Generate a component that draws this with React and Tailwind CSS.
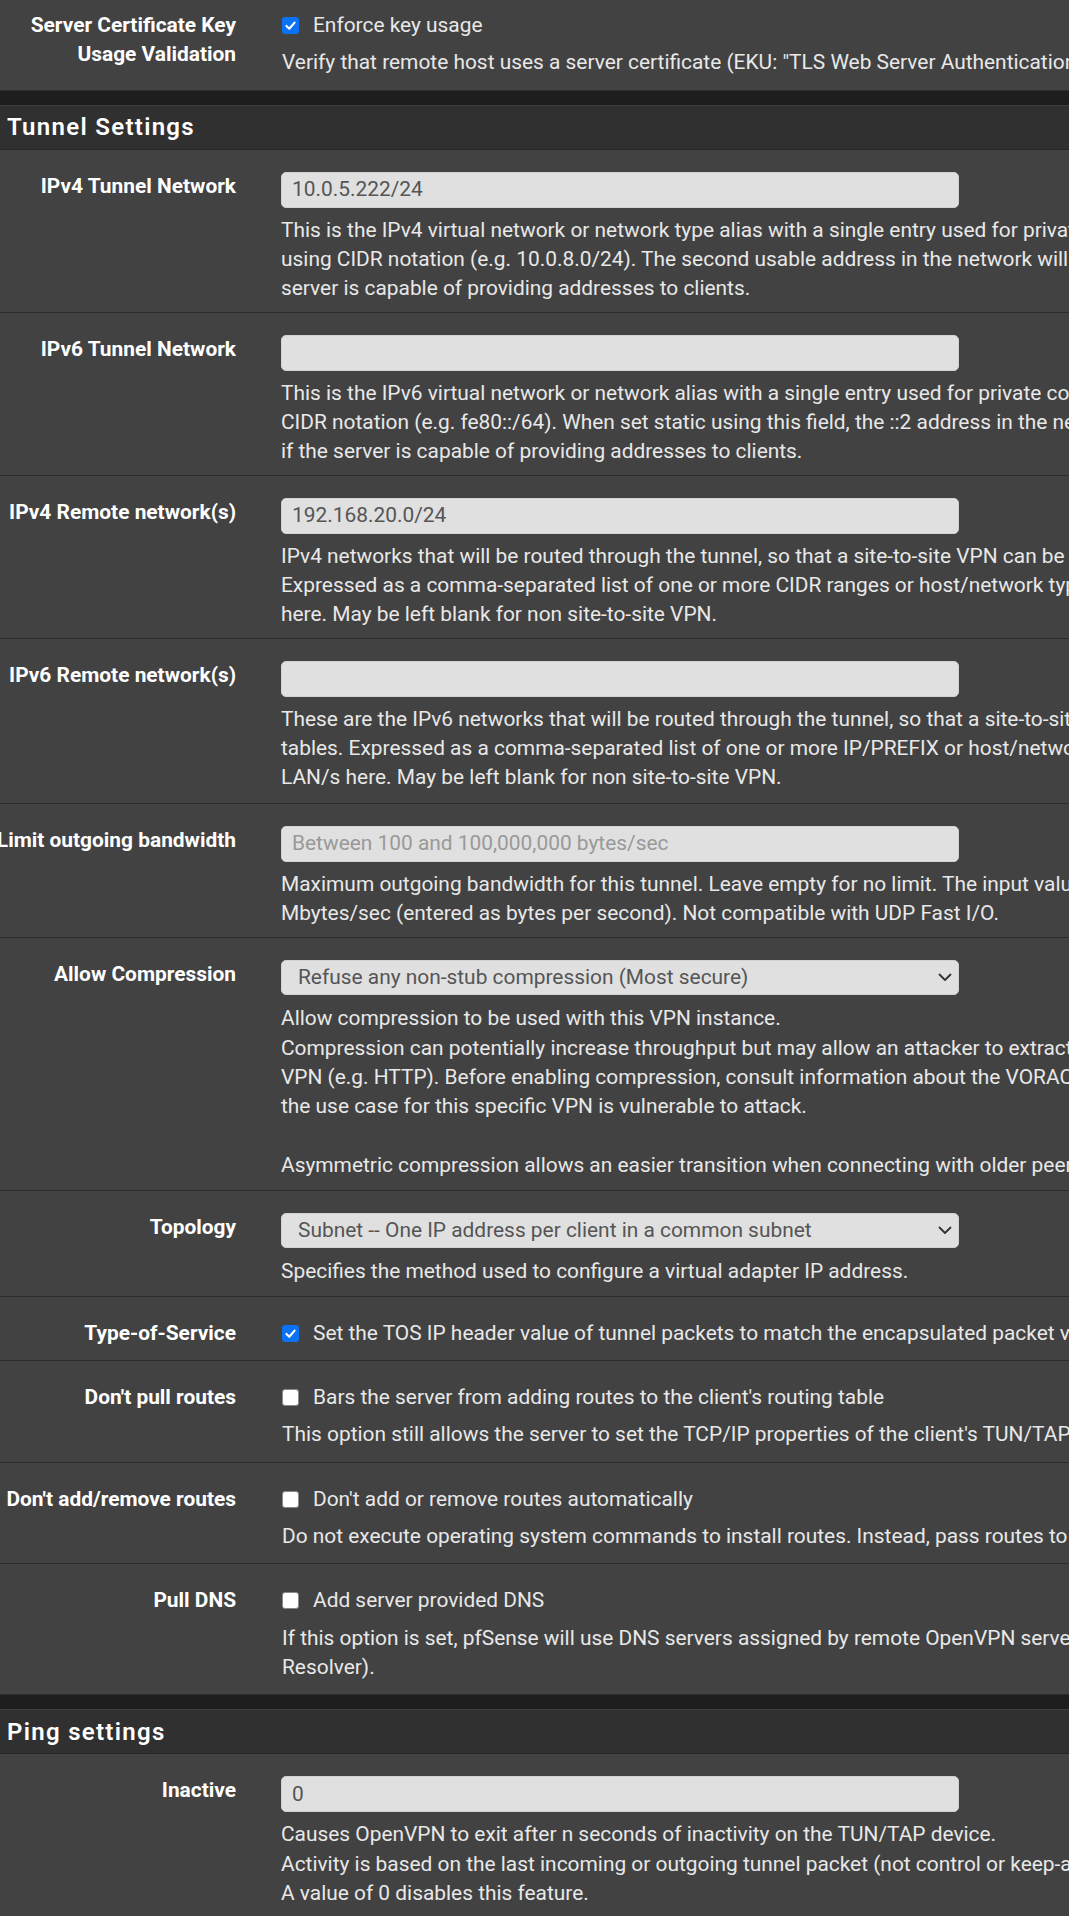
import React from "react";

const Check = ({ checked }) =>
  checked ? (
    <span className="w-[17px] h-[17px] rounded-[3px] bg-[#0b72f5] flex items-center justify-center shrink-0">
      <svg width="13" height="13" viewBox="0 0 16 16">
        <path d="M3 8.5 L6.5 12 L13 4.5" fill="none" stroke="#fff" strokeWidth="2.6" strokeLinecap="round" strokeLinejoin="round" />
      </svg>
    </span>
  ) : (
    <span className="w-[17px] h-[17px] rounded-[3px] bg-white border border-[#8a8a8a] shrink-0" />
  );

const Label = ({ lines }) => (
  <div className="w-[236px] shrink-0 flex flex-col items-end pt-[22px]">
    {lines.map((l, i) => (
      <div key={i} className="whitespace-nowrap font-bold text-white leading-[29.33px]">
        {l}
      </div>
    ))}
  </div>
);

const Help = ({ lines, className = "mt-[8px]" }) => (
  <div className={className}>
    {lines.map((l, i) => (
      <div key={i} className="whitespace-nowrap leading-[29.33px] h-[29.33px] text-[#e8e8e8]">
        {l}
      </div>
    ))}
  </div>
);

const InputRow = ({ label, value, placeholder, help, pb = "pb-[8px]", helpClass }) => (
  <div className={`flex border-b border-[#2c2c2c] ${pb}`}>
    <Label lines={[label]} />
    <div className="ml-[45px] pt-[22px]">
      <div className="w-[678px] h-[36px] rounded-[5px] bg-[#e0e0e0] border border-[#d2d2d2] flex items-center px-[10px] leading-none">
        {value ? (
          <span className="text-[#555]">{value}</span>
        ) : (
          <span className="text-[#999]">{placeholder}</span>
        )}
      </div>
      <Help lines={help} className={helpClass} />
    </div>
  </div>
);

const SelectRow = ({ label, value, help, pb = "pb-[9px]", helpClass = "mt-[9px]" }) => (
  <div className={`flex border-b border-[#2c2c2c] ${pb}`}>
    <Label lines={[label]} />
    <div className="ml-[45px] pt-[22px]">
      <div className="w-[678px] h-[35px] rounded-[5px] bg-[#e0e0e0] border border-[#d2d2d2] flex items-center justify-between pl-[16px] pr-[6px] leading-none">
        <span className="text-[#555] whitespace-nowrap">{value}</span>
        <svg width="14" height="9" viewBox="0 0 14 9">
          <path d="M1.5 1.5 L7 7 L12.5 1.5" fill="none" stroke="#333" strokeWidth="1.8" strokeLinecap="round" strokeLinejoin="round" />
        </svg>
      </div>
      <Help lines={help} className={helpClass} />
    </div>
  </div>
);

const CheckRow = ({ label, checked, text, help, className = "" }) => (
  <div className={`flex border-b border-[#2c2c2c] pb-[12px] ${className}`}>
    <Label lines={label} />
    <div className="ml-[46px] pt-[22px]">
      <div className="flex items-center h-[29.33px] whitespace-nowrap">
        <Check checked={checked} />
        <span className="ml-[14px] text-[#e8e8e8]">{text}</span>
      </div>
      {help && <Help lines={help} />}
    </div>
  </div>
);

const SectionHeader = ({ title }) => (
  <>
    <div className="h-[14px] bg-[#1e1e1e]" />
    <div className="h-[45px] bg-[#303030] border-t border-[#3d3d3d] border-b border-b-[#262626] flex items-center pl-[7px]">
      <span className="text-[24px] font-semibold tracking-[1.3px] text-white">{title}</span>
    </div>
  </>
);

export default function App() {
  return (
    <div className="w-[1069px] h-[1916px] overflow-hidden bg-[#424242] font-['Roboto',sans-serif] text-[20.9px]">
      <CheckRow
        className="mt-[-11px]"
        label={["Server Certificate Key", "Usage Validation"]}
        checked
        text="Enforce key usage"
        help={['Verify that remote host uses a server certificate (EKU: "TLS Web Server Authentication").']}
      />
      <SectionHeader title="Tunnel Settings" />
      <InputRow
        label="IPv4 Tunnel Network"
        value="10.0.5.222/24"
        help={[
          "This is the IPv4 virtual network or network type alias with a single entry used for private communications between this client and the server expressed",
          "using CIDR notation (e.g. 10.0.8.0/24). The second usable address in the network will be assigned to the client virtual interface. Leave blank if the",
          "server is capable of providing addresses to clients.",
        ]}
      />
      <InputRow
        label="IPv6 Tunnel Network"
        value=""
        placeholder=""
        help={[
          "This is the IPv6 virtual network or network alias with a single entry used for private communications between this client and the server expressed using",
          "CIDR notation (e.g. fe80::/64). When set static using this field, the ::2 address in the network will be assigned to the client virtual interface. Leave blank",
          "if the server is capable of providing addresses to clients.",
        ]}
      />
      <InputRow
        label="IPv4 Remote network(s)"
        value="192.168.20.0/24"
        help={[
          "IPv4 networks that will be routed through the tunnel, so that a site-to-site VPN can be established without manually changing the routing tables.",
          "Expressed as a comma-separated list of one or more CIDR ranges or host/network type aliases. If this is a site-to-site VPN, enter the remote LAN/s",
          "here. May be left blank for non site-to-site VPN.",
        ]}
      />
      <InputRow
        label="IPv6 Remote network(s)"
        value=""
        placeholder=""
        pb="pb-[10px]"
        help={[
          "These are the IPv6 networks that will be routed through the tunnel, so that a site-to-site VPN can be established without manually changing the routing",
          "tables. Expressed as a comma-separated list of one or more IP/PREFIX or host/network type aliases. If this is a site-to-site VPN, enter the remote",
          "LAN/s here. May be left blank for non site-to-site VPN.",
        ]}
      />
      <InputRow
        label="Limit outgoing bandwidth"
        value=""
        placeholder="Between 100 and 100,000,000 bytes/sec"
        pb="pb-[9px]"
        help={[
          "Maximum outgoing bandwidth for this tunnel. Leave empty for no limit. The input value has to be something between 100 bytes/sec and 100",
          "Mbytes/sec (entered as bytes per second). Not compatible with UDP Fast I/O.",
        ]}
      />
      <SelectRow
        label="Allow Compression"
        value="Refuse any non-stub compression (Most secure)"
        pb="pb-[10px]"
        help={[
          "Allow compression to be used with this VPN instance.",
          "Compression can potentially increase throughput but may allow an attacker to extract secrets if they can control compressed plaintext traversing the",
          "VPN (e.g. HTTP). Before enabling compression, consult information about the VORACLE, CRIME, TIME, and BREACH attacks against TLS to decide if",
          "the use case for this specific VPN is vulnerable to attack.",
          "",
          "Asymmetric compression allows an easier transition when connecting with older peers.",
        ]}
      />
      <SelectRow
        label="Topology"
        value="Subnet -- One IP address per client in a common subnet"
        help={["Specifies the method used to configure a virtual adapter IP address."]}
      />
      <CheckRow
        label={["Type-of-Service"]}
        checked
        text="Set the TOS IP header value of tunnel packets to match the encapsulated packet value."
      />
      <CheckRow
        label={["Don't pull routes"]}
        text="Bars the server from adding routes to the client's routing table"
        help={["This option still allows the server to set the TCP/IP properties of the client's TUN/TAP interface."]}
      />
      <CheckRow
        label={["Don't add/remove routes"]}
        text="Don't add or remove routes automatically"
        help={["Do not execute operating system commands to install routes. Instead, pass routes to --route-up script using environmental variables."]}
      />
      <CheckRow
        label={["Pull DNS"]}
        text="Add server provided DNS"
        help={[
          "If this option is set, pfSense will use DNS servers assigned by remote OpenVPN server for its own purposes (including the DNS Forwarder/DNS",
          "Resolver).",
        ]}
      />
      <SectionHeader title="Ping settings" />
      <InputRow
        label="Inactive"
        value="0"
        help={[
          "Causes OpenVPN to exit after n seconds of inactivity on the TUN/TAP device.",
          "Activity is based on the last incoming or outgoing tunnel packet (not control or keep-alive packets).",
          "A value of 0 disables this feature.",
        ]}
      />
    </div>
  );
}
